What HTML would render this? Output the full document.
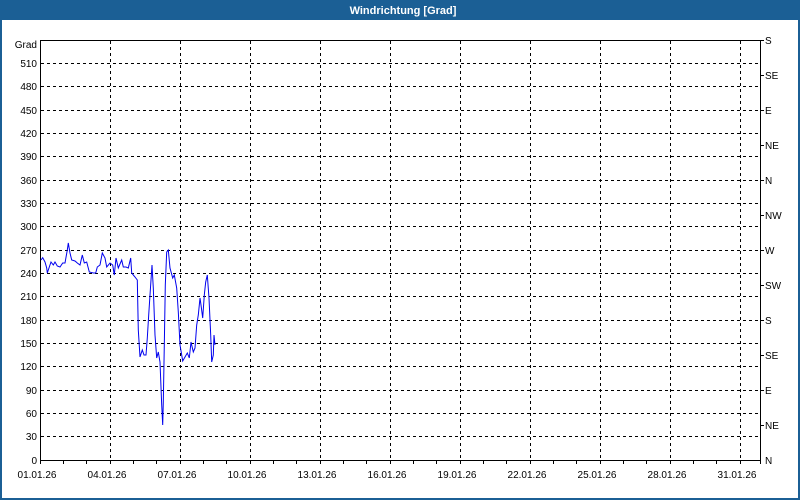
<!DOCTYPE html>
<html><head><meta charset="utf-8"><style>
html,body{margin:0;padding:0;background:#fff}
svg{display:block;font-family:"Liberation Sans","DejaVu Sans",sans-serif}
</style></head><body>
<svg width="800" height="500" viewBox="0 0 800 500" xmlns="http://www.w3.org/2000/svg">
<rect x="0" y="0" width="800" height="500" fill="#fff"/>
<rect x="0" y="0" width="800" height="20" fill="#1b5f95"/>
<rect x="0" y="0" width="2" height="500" fill="#1b5f95"/>
<rect x="798" y="0" width="2" height="500" fill="#1b5f95"/>
<rect x="0" y="498" width="800" height="2" fill="#1b5f95"/>
<text x="403" y="14" fill="#fff" font-size="11" font-weight="bold" text-anchor="middle">Windrichtung [Grad]</text>
<g stroke="#000" stroke-width="1" stroke-dasharray="3,3" fill="none">
<path d="M41 436.5H760M41 413.5H760M41 390.5H760M41 366.5H760M41 343.5H760M41 320.5H760M41 296.5H760M41 273.5H760M41 250.5H760M41 226.5H760M41 203.5H760M41 180.5H760M41 156.5H760M41 133.5H760M41 110.5H760M41 86.5H760M41 63.5H760"/>
<path d="M110.5 41V460M180.5 41V460M250.5 41V460M320.5 41V460M390.5 41V460M460.5 41V460M530.5 41V460M600.5 41V460M670.5 41V460M740.5 41V460"/>
</g>
<g stroke="#000" stroke-width="1" fill="none">
<path d="M40.5 40V464M40 460.5H760.5M40 40.5H764M760.5 40V464"/>
<path d="M63.5 460v4M86.5 460v4M110.5 460v4M133.5 460v4M156.5 460v4M180.5 460v4M203.5 460v4M226.5 460v4M250.5 460v4M273.5 460v4M296.5 460v4M320.5 460v4M343.5 460v4M366.5 460v4M390.5 460v4M413.5 460v4M436.5 460v4M460.5 460v4M483.5 460v4M506.5 460v4M530.5 460v4M553.5 460v4M576.5 460v4M600.5 460v4M623.5 460v4M646.5 460v4M670.5 460v4M693.5 460v4M716.5 460v4M740.5 460v4"/>
<path d="M760 425.5h4M760 390.5h4M760 355.5h4M760 320.5h4M760 285.5h4M760 250.5h4M760 215.5h4M760 180.5h4M760 145.5h4M760 110.5h4M760 75.5h4"/>
</g>
<g font-size="10" fill="#000" text-anchor="end">
<text x="37" y="48">Grad</text>
<text x="37" y="67">510</text><text x="37" y="90">480</text><text x="37" y="114">450</text><text x="37" y="137">420</text><text x="37" y="160">390</text><text x="37" y="184">360</text><text x="37" y="207">330</text><text x="37" y="230">300</text><text x="37" y="254">270</text><text x="37" y="277">240</text><text x="37" y="300">210</text><text x="37" y="324">180</text><text x="37" y="347">150</text><text x="37" y="370">120</text><text x="37" y="394">90</text><text x="37" y="417">60</text><text x="37" y="440">30</text><text x="37" y="464">0</text>
</g>
<g font-size="10" fill="#000">
<text x="765" y="44">S</text><text x="765" y="79">SE</text><text x="765" y="114">E</text><text x="765" y="149">NE</text><text x="765" y="184">N</text><text x="765" y="219">NW</text><text x="765" y="254">W</text><text x="765" y="289">SW</text><text x="765" y="324">S</text><text x="765" y="359">SE</text><text x="765" y="394">E</text><text x="765" y="429">NE</text><text x="765" y="464">N</text>
</g>
<g font-size="10" fill="#000" text-anchor="middle">
<text x="37" y="478">01.01.26</text><text x="107" y="478">04.01.26</text><text x="177" y="478">07.01.26</text><text x="247" y="478">10.01.26</text><text x="317" y="478">13.01.26</text><text x="387" y="478">16.01.26</text><text x="457" y="478">19.01.26</text><text x="527" y="478">22.01.26</text><text x="597" y="478">25.01.26</text><text x="667" y="478">28.01.26</text><text x="737" y="478">31.01.26</text>
</g>
<polyline fill="none" stroke="#0000ee" stroke-width="1" points="41,260 42.7,257.7 45,262 46.7,268 47.3,273 49.3,267 51,262 53.3,265 55,262 57.3,266 60,267 62.7,263 65,263 67.3,250 68.3,243 70,253 71.7,260 75,261 77.3,263 80,265 82.3,255 84.3,263 86.7,262 89.3,272 93.3,273 95.7,273 97.3,267 100,265 102.3,253 105,258 106.7,267 110,263 112.7,265 114.3,275 116,258 118.3,268 121.7,260 123.3,267 126,267 128.3,268 130.7,258 131.7,273 135,277 137.3,280 138.3,330 140,357 142.3,350 144,355 146,355 147.3,338 148.7,315 150,295 152,265 153.3,288 155,335 156.7,358 158.3,352 160,362 161.7,405 162.7,425 163.3,402 164.3,345 165.3,285 166.7,252 168.3,250 170,268 172.7,278 174.3,275 176.7,288 178.3,312 180,345 182.7,361 185,357 187.3,353 189.3,358 191,342 193.3,352 195,348 196.7,325 198.3,315 200,298 201,305 202.7,318 204.3,295 205.7,282 207.3,275 209,298 210.7,335 211.7,362 213.3,355 214,335 215,345"/>
</svg>
</body></html>
